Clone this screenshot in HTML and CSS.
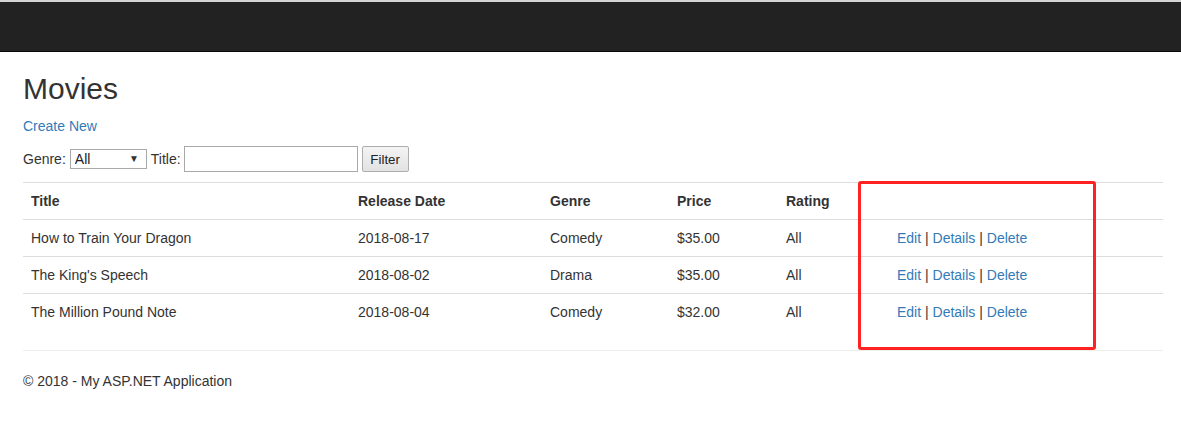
FILE: index.html
```html
<!DOCTYPE html>
<html lang="en">
<head>
<meta charset="utf-8">
<title>Movies</title>
<link rel="stylesheet" href="styles.css">
</head>
<body>
<div class="topband"></div>
<nav class="navbar"></nav>
<div class="container">
  <h2 class="page-title">Movies</h2>
  <p class="create"><a href="#">Create New</a></p>
  <form class="filter">
    <label class="lbl">Genre:</label>
    <span class="select-wrap"><select class="select"><option>All</option><option>Comedy</option><option>Drama</option></select></span>
    <label class="lbl lbl-title">Title:</label>
    <input class="text-input" type="text">
    <button class="btn" type="button">Filter</button>
  </form>
  <div class="table-wrap">
    <table class="table">
      <colgroup>
        <col class="c1"><col class="c2"><col class="c3"><col class="c4"><col class="c5"><col class="c6">
      </colgroup>
      <thead>
        <tr><th>Title</th><th>Release Date</th><th>Genre</th><th>Price</th><th>Rating</th><th></th></tr>
      </thead>
      <tbody>
        <tr><td>How to Train Your Dragon</td><td>2018-08-17</td><td>Comedy</td><td>$35.00</td><td>All</td><td><a href="#">Edit</a> | <a href="#">Details</a> | <a href="#">Delete</a></td></tr>
        <tr><td>The King's Speech</td><td>2018-08-02</td><td>Drama</td><td>$35.00</td><td>All</td><td><a href="#">Edit</a> | <a href="#">Details</a> | <a href="#">Delete</a></td></tr>
        <tr><td>The Million Pound Note</td><td>2018-08-04</td><td>Comedy</td><td>$32.00</td><td>All</td><td><a href="#">Edit</a> | <a href="#">Details</a> | <a href="#">Delete</a></td></tr>
      </tbody>
    </table>
    <div class="highlight"></div>
  </div>
  <hr class="rule">
  <footer class="footer"><p>&copy; 2018 - My ASP.NET Application</p></footer>
</div>
</body>
</html>
```
FILE: styles.css
```css
* { box-sizing: border-box; }
html, body { margin: 0; padding: 0; background: #fff; }
body {
  font-family: "Liberation Sans", Arial, Helvetica, sans-serif;
  font-size: 14px;
  line-height: 20px;
  color: #333;
}
a { color: #337ab7; text-decoration: none; }

.topband { height: 2px; background: #d4d4d4; }
.navbar {
  height: 50px;
  background: #222;
  border-bottom: 1px solid #080808;
}

.container { padding: 0 18px 0 23px; }

.page-title {
  margin: 20px 0 10px;
  font-size: 30px;
  font-weight: 500;
  line-height: 33px;
}
.create { margin: 0 0 10px; height: 21px; padding-top: 1px; }

.filter {
  display: flex;
  align-items: center;
  height: 26px;
  margin: 0 0 10px;
}
.lbl { margin-right: 4px; }
.lbl-title { margin-right: 3px; }
.select-wrap {
  position: relative;
  display: inline-block;
  margin-right: 4px;
}
.select-wrap::after {
  content: "\25BC";
  position: absolute;
  right: 8px;
  top: 5px;
  font-size: 10px;
  line-height: 10px;
  color: #333;
  pointer-events: none;
}
.select {
  appearance: none;
  -webkit-appearance: none;
  width: 77px;
  height: 20px;
  border: 1px solid #a9a9a9;
  border-radius: 0;
  background: #fff;
  padding: 0 0 0 4px;
  font-family: "Liberation Sans", Arial, sans-serif;
  font-size: 14px;
  color: #222;
  display: block;
}
.text-input {
  width: 174px;
  height: 26px;
  border: 1px solid #a9a9a9;
  margin: 0 4px 0 0;
  padding: 2px 4px;
  font-family: "Liberation Sans", Arial, sans-serif;
  font-size: 13.33px;
  background: #fff;
}
.btn {
  width: 47px;
  height: 26px;
  padding: 0;
  border: 1px solid #adadad;
  border-radius: 2px;
  background: linear-gradient(#f4f4f4, #e2e2e2);
  font-family: "Liberation Sans", Arial, sans-serif;
  font-size: 13.33px;
  color: #222;
}

.table-wrap { position: relative; margin-bottom: 20px; }
.table {
  width: 100%;
  table-layout: fixed;
  border-collapse: collapse;
  border-spacing: 0;
}
.c1 { width: 327px; }
.c2 { width: 192px; }
.c3 { width: 127px; }
.c4 { width: 109px; }
.c5 { width: 111px; }
.c6 { width: auto; }
.table th, .table td {
  padding: 8px;
  line-height: 20px;
  text-align: left;
  vertical-align: top;
  border-top: 1px solid #ddd;
  white-space: nowrap;
}
.table th { font-weight: bold; }

.highlight {
  position: absolute;
  left: 835px;
  top: -1px;
  width: 238px;
  height: 169px;
  border: 3px solid #ff2222;
  border-radius: 3px;
  pointer-events: none;
}

.rule {
  margin: 0 0 20px;
  border: 0;
  border-top: 1px solid #eee;
  height: 0;
}
.footer p { margin: 0 0 20px; }
```
